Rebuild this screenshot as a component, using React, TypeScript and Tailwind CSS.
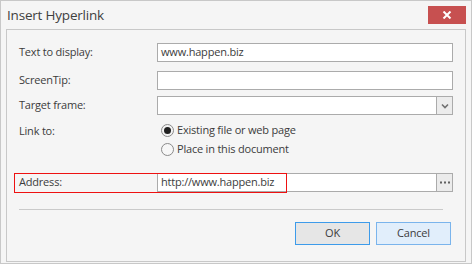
import React from "react";

const font = { fontFamily: '"Open Sans", "Noto Sans", sans-serif' };

export default function App() {
  return (
    <div
      className="w-[472px] h-[264px] bg-[#f5f5f5] border border-[#c8c8c8] flex flex-col text-[#3c3c3c] overflow-hidden"
      style={font}
    >
      {/* Title bar */}
      <div className="h-[28px] flex items-start shrink-0">
        <div className="ml-[6px] mt-[5px] text-[13.5px] leading-[18px] tracking-[-0.2px] text-[#404040]">Insert Hyperlink</div>
        <div className="ml-auto mr-[5px] mt-[5px] w-[38px] h-[18px] bg-[#c75050] flex items-center justify-center">
          <svg width="10" height="8" viewBox="0 0 10 8">
            <path d="M1.5 0.5 L8.5 7.5 M8.5 0.5 L1.5 7.5" stroke="white" strokeWidth="2" />
          </svg>
        </div>
      </div>

      {/* Panel */}
      <div className="ml-[5px] mr-[5px] h-[233px] border border-[#c8c8c8] flex flex-col pl-[12px] pr-[12px] pt-[13px] text-[11px] tracking-[-0.2px]">
        <div className="flex items-center h-[19px]">
          <div className="w-[138px]">Text to display:</div>
          <div className="w-[296px] h-[19px] border border-[#ababab] bg-white flex items-center pl-[3px]">www.happen.biz</div>
        </div>
        <div className="flex items-center h-[19px] mt-[9px]">
          <div className="w-[138px]">ScreenTip:</div>
          <div className="w-[296px] h-[19px] border border-[#ababab] bg-white"></div>
        </div>
        <div className="flex items-center h-[19px] mt-[6px]">
          <div className="w-[138px]">Target frame:</div>
          <div className="w-[296px] h-[19px] border border-[#ababab] bg-white flex">
            <div className="flex-1"></div>
            <div className="w-[16px] h-full border-l border-[#ababab] bg-[#ececec] flex items-center justify-center">
              <svg width="8" height="6" viewBox="0 0 8 6">
                <path d="M1 1.5 L4 4.5 L7 1.5" stroke="#707070" strokeWidth="1.6" fill="none" />
              </svg>
            </div>
          </div>
        </div>
        <div className="flex mt-[6px]">
          <div className="w-[138px] leading-[19px]">Link to:</div>
          <div className="flex flex-col pl-[4px]">
            <div className="flex items-center h-[19px]">
              <div className="w-[13px] h-[13px] rounded-full border border-[#8a8a8a] bg-[#f3f3f3] flex items-center justify-center">
                <div className="w-[7px] h-[7px] rounded-full bg-[#202020]"></div>
              </div>
              <span className="ml-[3px]">Existing file or web page</span>
            </div>
            <div className="flex items-center h-[19px]">
              <div className="w-[13px] h-[13px] rounded-full border border-[#8a8a8a] bg-[#f7f7f7]"></div>
              <span className="ml-[3px]">Place in this document</span>
            </div>
          </div>
        </div>
        <div className="relative flex items-center h-[19px] mt-[14px]">
          <div className="w-[138px]">Address:</div>
          <div className="w-[296px] h-[19px] border border-[#ababab] bg-white flex">
            <div className="flex-1 flex items-center pl-[3px]">http://www.happen.biz</div>
            <div className="w-[16px] h-full border-l border-[#ababab] bg-[#ebebeb] flex items-center justify-center">
              <svg width="10" height="3" viewBox="0 0 10 3">
                <rect x="0" y="0.5" width="2" height="2" fill="#606060" />
                <rect x="4" y="0.5" width="2" height="2" fill="#606060" />
                <rect x="8" y="0.5" width="2" height="2" fill="#606060" />
              </svg>
            </div>
          </div>
          <div className="absolute left-[-5px] top-0 w-[273px] h-[20px] border border-[#ee1111]"></div>
        </div>
        <div className="mt-[17px] w-[424px] h-px bg-[#cacaca]"></div>
        <div className="flex justify-end gap-[6px] mt-[12px] pr-[2px]">
          <div className="w-[75px] h-[23px] border border-[#3d9bea] bg-[#e6e6e6] flex items-center justify-center">OK</div>
          <div className="w-[75px] h-[23px] border border-[#7ab4ec] bg-[#e1eefb] flex items-center justify-center">Cancel</div>
        </div>
      </div>
    </div>
  );
}
